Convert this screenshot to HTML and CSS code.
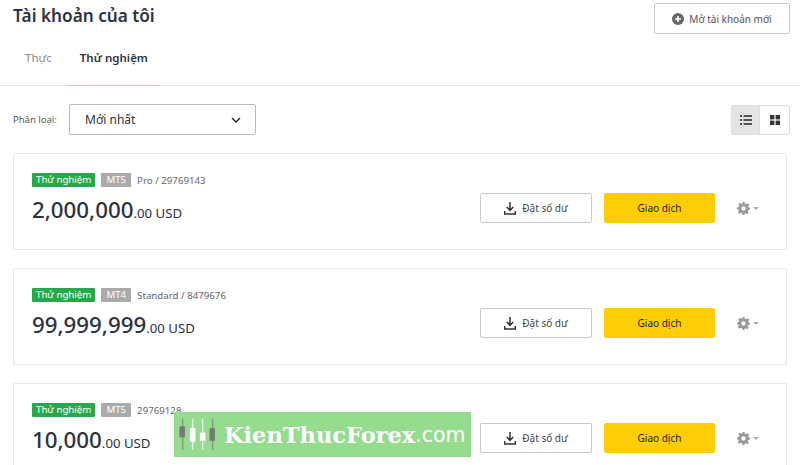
FILE: index.html
```html
<!DOCTYPE html>
<html lang="vi">

<head>
  <meta charset="UTF-8" />
  <title>Tài khoản của tôi</title>
  <link rel="stylesheet" href="styles.css">
</head>

<body>
  <header class="page-head">
    <h1 class="page-title">Tài khoản của tôi</h1>
    <button class="btn btn-new">
      <svg class="icon-plus" viewBox="0 0 12 12" width="12" height="12"><circle cx="6" cy="6" r="6" fill="#666"/><path d="M6 3v6M3 6h6" stroke="#fff" stroke-width="1.6"/></svg>
      Mở tài khoản mới
    </button>
  </header>

  <nav class="tabs">
    <a class="tab">Thực</a>
    <a class="tab active">Thử nghiệm</a>
  </nav>

  <div class="toolbar">
    <span class="sort-label">Phân loại:</span>
    <div class="sort-select">
      <span>Mới nhất</span>
      <svg viewBox="0 0 10 6" width="10" height="6"><path d="M1 1l4 4 4-4" fill="none" stroke="#222" stroke-width="1.4"/></svg>
    </div>
    <div class="view-toggle">
      <span class="view-btn selected">
        <svg viewBox="0 0 12 10" width="12" height="10"><path d="M0 1h2M3.5 1H12M0 5h2M3.5 5H12M0 9h2M3.5 9H12" stroke="#222" stroke-width="1.3"/></svg>
      </span>
      <span class="view-btn">
        <svg viewBox="0 0 10 10" width="10" height="10" fill="#333"><rect width="4.4" height="4.4"/><rect x="5.6" width="4.4" height="4.4"/><rect y="5.6" width="4.4" height="4.4"/><rect x="5.6" y="5.6" width="4.4" height="4.4"/></svg>
      </span>
    </div>
  </div>

  <section class="card">
    <div class="card-info">
      <div class="card-tags">
        <span class="tag tag-green">Thử nghiệm</span>
        <span class="tag tag-grey">MT5</span>
        <span class="card-id">Pro / 29769143</span>
      </div>
      <div class="balance"><b>2,000,000</b><small>.00 USD</small></div>
    </div>
    <button class="btn btn-outline">
      <svg viewBox="0 0 12 13" width="12" height="13"><path d="M6 0v8M2.8 5L6 8.4 9.2 5M.7 9v3h10.6V9" fill="none" stroke="#333" stroke-width="1.5"/></svg>
      Đặt số dư
    </button>
    <button class="btn btn-trade">Giao dịch</button>
    <div class="gear">
      <svg viewBox="0 0 24 24" width="13" height="13"><path fill="#999" fill-rule="evenodd" d="M10 0h4l.6 3.3 2.3 1 2.8-1.9 2.9 2.9-1.9 2.8 1 2.3L24 10v4l-3.3.6-1 2.3 1.9 2.8-2.9 2.9-2.8-1.9-2.3 1L14 24h-4l-.6-3.3-2.3-1-2.8 1.9-2.9-2.9 1.9-2.8-1-2.3L0 14v-4l3.3-.6 1-2.3-1.9-2.8 2.9-2.9 2.8 1.9 2.3-1zM12 8a4 4 0 1 0 0 8 4 4 0 0 0 0-8z"/></svg>
      <i class="caret"></i>
    </div>
  </section>

  <section class="card">
    <div class="card-info">
      <div class="card-tags">
        <span class="tag tag-green">Thử nghiệm</span>
        <span class="tag tag-grey">MT4</span>
        <span class="card-id">Standard / 8479676</span>
      </div>
      <div class="balance"><b>99,999,999</b><small>.00 USD</small></div>
    </div>
    <button class="btn btn-outline">
      <svg viewBox="0 0 12 13" width="12" height="13"><path d="M6 0v8M2.8 5L6 8.4 9.2 5M.7 9v3h10.6V9" fill="none" stroke="#333" stroke-width="1.5"/></svg>
      Đặt số dư
    </button>
    <button class="btn btn-trade">Giao dịch</button>
    <div class="gear">
      <svg viewBox="0 0 24 24" width="13" height="13"><path fill="#999" fill-rule="evenodd" d="M10 0h4l.6 3.3 2.3 1 2.8-1.9 2.9 2.9-1.9 2.8 1 2.3L24 10v4l-3.3.6-1 2.3 1.9 2.8-2.9 2.9-2.8-1.9-2.3 1L14 24h-4l-.6-3.3-2.3-1-2.8 1.9-2.9-2.9 1.9-2.8-1-2.3L0 14v-4l3.3-.6 1-2.3-1.9-2.8 2.9-2.9 2.8 1.9 2.3-1zM12 8a4 4 0 1 0 0 8 4 4 0 0 0 0-8z"/></svg>
      <i class="caret"></i>
    </div>
  </section>

  <section class="card">
    <div class="card-info">
      <div class="card-tags">
        <span class="tag tag-green">Thử nghiệm</span>
        <span class="tag tag-grey">MT5</span>
        <span class="card-id">29769128</span>
      </div>
      <div class="balance"><b>10,000</b><small>.00 USD</small></div>
    </div>
    <button class="btn btn-outline">
      <svg viewBox="0 0 12 13" width="12" height="13"><path d="M6 0v8M2.8 5L6 8.4 9.2 5M.7 9v3h10.6V9" fill="none" stroke="#333" stroke-width="1.5"/></svg>
      Đặt số dư
    </button>
    <button class="btn btn-trade">Giao dịch</button>
    <div class="gear">
      <svg viewBox="0 0 24 24" width="13" height="13"><path fill="#999" fill-rule="evenodd" d="M10 0h4l.6 3.3 2.3 1 2.8-1.9 2.9 2.9-1.9 2.8 1 2.3L24 10v4l-3.3.6-1 2.3 1.9 2.8-2.9 2.9-2.8-1.9-2.3 1L14 24h-4l-.6-3.3-2.3-1-2.8 1.9-2.9-2.9 1.9-2.8-1-2.3L0 14v-4l3.3-.6 1-2.3-1.9-2.8 2.9-2.9 2.8 1.9 2.3-1zM12 8a4 4 0 1 0 0 8 4 4 0 0 0 0-8z"/></svg>
      <i class="caret"></i>
    </div>
  </section>

  <div class="watermark">
    <svg viewBox="0 0 44 34" width="40" height="31">
      <path d="M15 0v34M26 0v34" stroke-width="1.5" stroke="#e8f5e6"/>
      <path d="M4 0v34M37 0v34" stroke-width="1.5" stroke="#7c9c79"/>
      <rect x="0.5" y="8" width="6" height="12" fill="#777"/>
      <rect x="12" y="10" width="6" height="15" fill="#fff"/>
      <rect x="23" y="15" width="6" height="9" fill="#fff"/>
      <rect x="33.5" y="10" width="6" height="14" fill="#777"/>
    </svg>
    <span class="wm-name">KienThucForex</span><span class="wm-com">.com</span>
  </div>
</body>

</html>
```

FILE: styles.css
```css
* {
  margin: 0;
  padding: 0;
  box-sizing: border-box;
}

html, body {
  width: 800px;
  height: 465px;
  overflow: hidden;
  background: #fff;
  font-family: "Noto Sans", "Open Sans", sans-serif;
  color: #2b3340;
}

.page-head {
  display: flex;
  justify-content: space-between;
  align-items: flex-start;
  height: 40px;
  padding: 3px 10px 0 13px;
}

.page-title {
  font-size: 17.2px;
  line-height: 26px;
  font-weight: 600;
}

.btn {
  display: flex;
  align-items: center;
  justify-content: center;
  font-family: inherit;
  font-size: 10px;
  color: #333;
  background: #fff;
  border: 1px solid #c9c9c9;
  border-radius: 2px;
}

.btn-new {
  width: 136px;
  height: 31px;
  gap: 5px;
  color: #555;
}

.tabs {
  display: flex;
  height: 46px;
  padding-left: 12px;
  border-bottom: 1px solid #e3e3e3;
}

.tab {
  padding: 0 13px;
  font-size: 11.5px;
  line-height: 36px;
  color: #8a8a8a;
}

.tab.active {
  width: 92px;
  height: 46px;
  margin-left: 3px;
  padding: 0 12px;
  color: #2b3340;
  font-weight: 600;
  white-space: nowrap;
  border-bottom: 1px solid #f3cf4f;
}

.toolbar {
  display: flex;
  align-items: center;
  height: 31px;
  margin: 18px 10px 18px 13px;
}

.sort-label {
  width: 56px;
  font-size: 9.5px;
  color: #555;
}

.sort-select {
  display: flex;
  align-items: center;
  justify-content: space-between;
  width: 187px;
  height: 31px;
  padding: 0 14px 0 15px;
  font-size: 12px;
  color: #333;
  border: 1px solid #bbb;
  border-radius: 2px;
}

.view-toggle {
  display: flex;
  margin-left: auto;
  border: 1px solid #ddd;
  border-radius: 2px;
}

.view-btn {
  display: flex;
  align-items: center;
  justify-content: center;
  width: 29px;
  height: 28px;
}

.view-btn.selected {
  width: 28px;
  background: #e4e4e4;
  border-right: 1px solid #ddd;
}

.card {
  display: flex;
  align-items: flex-start;
  height: 97px;
  margin: 0 13px 18px;
  padding: 19px 21px 0 18px;
  border: 1px solid #e8e8e8;
  border-radius: 2px;
}

.card-info {
  flex: 1;
}

.card-tags {
  display: flex;
  align-items: center;
  gap: 6px;
  font-size: 9.7px;
}

.tag {
  height: 14px;
  padding: 0 4px;
  line-height: 14px;
  color: #fff;
  border-radius: 1px;
}

.tag-green {
  background: #27a84a;
}

.tag-grey {
  padding: 0 5px;
  background: #aaa;
}

.card-id {
  color: #666;
}

.balance {
  margin-top: 8px;
  line-height: 30px;
}

.balance b {
  font-size: 22.3px;
  font-weight: 500;
}

.balance small {
  font-size: 13.2px;
}

.btn-outline {
  width: 112px;
  height: 30px;
  gap: 6px;
  margin: 20px 12px 0 0;
  color: #444;
}

.btn-trade {
  width: 111px;
  height: 30px;
  margin-top: 20px;
  background: #ffcd05;
  border: 0;
  color: #222;
}

.gear {
  display: flex;
  align-items: center;
  gap: 3px;
  width: 28px;
  height: 30px;
  margin: 20px 0 0 22px;
}

.caret {
  border: 3px solid transparent;
  border-top-color: #aaa;
  border-bottom: 0;
}

.watermark {
  position: absolute;
  left: 174px;
  top: 412px;
  display: flex;
  align-items: center;
  width: 297px;
  height: 45px;
  padding-left: 5px;
  background: #96dc8f;
  color: #fff;
  white-space: nowrap;
}

.wm-name {
  margin-left: 5px;
  font-family: "DejaVu Serif", "Liberation Serif", serif;
  font-size: 22.5px;
  font-weight: 700;
}

.wm-com {
  font-family: "DejaVu Sans", sans-serif;
  font-size: 20.5px;
}
```
